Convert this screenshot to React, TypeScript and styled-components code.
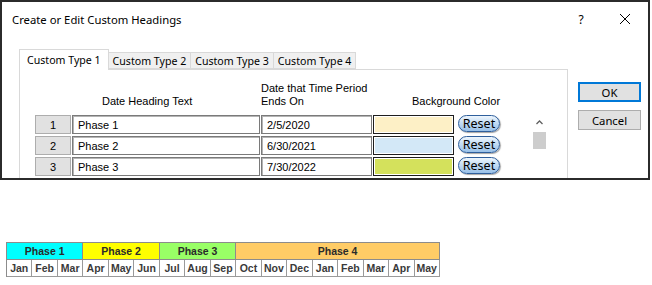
import React from "react";
import styled, { createGlobalStyle } from "styled-components";

const GlobalStyle = createGlobalStyle`
  body {
    margin: 0;
    background: #ffffff;
    font-family: "Noto Sans", "Liberation Sans", sans-serif;
  }
`;

const Dialog = styled.div`
  box-sizing: border-box;
  width: 650px;
  height: 180px;
  border: 2px solid #2b2b2b;
  background: #ffffff;
  overflow: hidden;
`;

const TitleBar = styled.div`
  display: flex;
  align-items: center;
  height: 34px;
  padding-left: 10px;
`;

const Title = styled.div`
  font-size: 11.3px;
  color: #000;
`;

const TitleButtons = styled.div`
  margin-left: auto;
  display: flex;
  align-items: center;
`;

const HelpGlyph = styled.span`
  font-size: 12px;
  width: 12px;
  text-align: center;
  margin-right: 32px;
`;

const CloseIcon = styled.svg`
  width: 12px;
  height: 12px;
  margin-right: 17px;
`;

const Body = styled.div`
  display: flex;
  padding: 13px 0 0 17px;
`;

const TabArea = styled.div`
  width: 549px;
`;

const TabStrip = styled.div`
  display: flex;
  align-items: flex-end;
  height: 20px;
`;

const Tab = styled.div<{ $active?: boolean }>`
  box-sizing: border-box;
  height: ${(p) => (p.$active ? "21px" : "17px")};
  margin-bottom: ${(p) => (p.$active ? "-1px" : "0")};
  padding: ${(p) => (p.$active ? "3px 7px 0 7px" : "1px 4px 0 4px")};
  border: 1px solid #d9d9d9;
  border-bottom: ${(p) => (p.$active ? "none" : "1px solid #d9d9d9")};
  margin-left: ${(p) => (p.$active ? "0" : "-1px")};
  background: ${(p) => (p.$active ? "#ffffff" : "#f0f0f0")};
  font-size: 10.6px;
  line-height: 15px;
  position: relative;
  z-index: ${(p) => (p.$active ? 1 : 0)};
  white-space: nowrap;
`;

const Panel = styled.div`
  box-sizing: border-box;
  height: 140px;
  border: 1px solid #d9d9d9;
  padding: 12px 0 0 15px;
  display: flex;
`;

const Grid = styled.div`
  display: grid;
  grid-template-columns: 36px 188px 111px 81px 45px;
  column-gap: 1px;
  row-gap: 2px;
  align-content: start;
  font-family: "Liberation Sans", Arial, sans-serif;
  font-size: 11px;
`;

const HeaderCell = styled.div<{ $indent?: number; $col: number }>`
  grid-row: 1;
  grid-column: ${(p) => p.$col};
  height: 26px;
  margin-bottom: 5px;
  display: flex;
  align-items: flex-end;
  padding-left: ${(p) => p.$indent ?? 0}px;
  line-height: 13px;
  white-space: nowrap;
`;

const NumButton = styled.div`
  box-sizing: border-box;
  height: 19px;
  background: #e1e1e1;
  border: 1px solid #adadad;
  display: flex;
  align-items: center;
  justify-content: center;
`;

const TextCell = styled.div`
  box-sizing: border-box;
  height: 19px;
  border: 1px solid #7a7a7a;
  box-shadow: inset 1px 1px 0 #b4b4b4;
  padding-left: 5px;
  display: flex;
  align-items: center;
  background: #fff;
  white-space: nowrap;
`;

const ColorCell = styled.div<{ $color: string }>`
  box-sizing: border-box;
  height: 19px;
  border: 1px solid #1e1e1e;
  box-shadow: inset 0 0 0 1px #ffffff;
  background: ${(p) => p.$color};
`;

const ResetButton = styled.div`
  box-sizing: border-box;
  margin-left: 3px;
  width: 42px;
  height: 17px;
  border: 1px solid #2f5f9c;
  border-radius: 9px;
  background: linear-gradient(#eef6fd 0%, #c5ddf4 45%, #98c0e8 100%);
  box-shadow: 1px 1px 1px rgba(0, 0, 0, 0.35);
  font-family: "Noto Sans", sans-serif;
  font-size: 12.5px;
  line-height: 15px;
  text-align: center;
`;

const ScrollBar = styled.div`
  margin: 33px 0 0 31px;
  width: 17px;
  display: flex;
  flex-direction: column;
  align-items: center;
`;

const ArrowIcon = styled.svg`
  width: 17px;
  height: 17px;
`;

const Thumb = styled.div`
  width: 13px;
  height: 17px;
  background: #cdcdcd;
`;

const SideButtons = styled.div`
  margin: 33px 0 0 10px;
  display: flex;
  flex-direction: column;
  gap: 8px;
`;

const DlgButton = styled.div<{ $default?: boolean }>`
  box-sizing: border-box;
  width: 63px;
  height: 20px;
  background: #e1e1e1;
  border: ${(p) => (p.$default ? "2px solid #0078d7" : "1px solid #adadad")};
  font-size: 11.3px;
  display: flex;
  align-items: center;
  justify-content: center;
`;

const Timeline = styled.div`
  margin: 62px 0 0 6px;
  width: 433px;
  display: grid;
  grid-template-columns: repeat(17, 1fr);
  border-top: 1px solid #8c8c8c;
  border-left: 1px solid #8c8c8c;
  font-family: "Liberation Sans", Arial, sans-serif;
  font-weight: bold;
  color: #2a2a2a;
`;

const PhaseCell = styled.div<{ $span: number; $color: string }>`
  grid-column: span ${(p) => p.$span};
  height: 16px;
  background: ${(p) => p.$color};
  border-right: 1px solid #8c8c8c;
  border-bottom: 1px solid #8c8c8c;
  font-size: 10.5px;
  line-height: 16px;
  text-align: center;
`;

const MonthCell = styled.div`
  height: 16px;
  background: #fff;
  border-right: 1px solid #9a9a9a;
  border-bottom: 1px solid #9a9a9a;
  font-size: 10.5px;
  line-height: 16px;
  text-align: center;
  color: #3a3a3a;
`;

const rows = [
  { n: 1, text: "Phase 1", date: "2/5/2020", color: "#fdf0c6" },
  { n: 2, text: "Phase 2", date: "6/30/2021", color: "#d3e8f7" },
  { n: 3, text: "Phase 3", date: "7/30/2022", color: "#d4e15c" },
  { n: 4, text: "", date: "", color: "#ffffff" },
];

const phases = [
  { label: "Phase 1", span: 3, color: "#00ffff" },
  { label: "Phase 2", span: 3, color: "#ffff00" },
  { label: "Phase 3", span: 3, color: "#99ff66" },
  { label: "Phase 4", span: 8, color: "#ffcc66" },
];

const months = [
  "Jan", "Feb", "Mar", "Apr", "May", "Jun", "Jul", "Aug", "Sep",
  "Oct", "Nov", "Dec", "Jan", "Feb", "Mar", "Apr", "May",
];

const tabs = ["Custom Type 1", "Custom Type 2", "Custom Type 3", "Custom Type 4"];

export default function App() {
  return (
    <>
      <GlobalStyle />
      <Dialog>
        <TitleBar>
          <Title>Create or Edit Custom Headings</Title>
          <TitleButtons>
            <HelpGlyph>?</HelpGlyph>
            <CloseIcon viewBox="0 0 12 12">
              <path d="M1 1 L11 11 M11 1 L1 11" stroke="#000" strokeWidth="1" />
            </CloseIcon>
          </TitleButtons>
        </TitleBar>
        <Body>
          <TabArea>
            <TabStrip>
              {tabs.map((t, i) => (
                <Tab key={t} $active={i === 0}>
                  {t}
                </Tab>
              ))}
            </TabStrip>
            <Panel>
              <Grid>
                <HeaderCell $col={1} />
                <HeaderCell $col={2} $indent={30}>Date Heading Text</HeaderCell>
                <HeaderCell $col={3}>
                  Date that Time Period
                  <br />
                  Ends On
                </HeaderCell>
                <HeaderCell $col={4} $indent={39}>Background Color</HeaderCell>
                <HeaderCell $col={5} />
                {rows.map((r) => (
                  <React.Fragment key={r.n}>
                    <NumButton>{r.n}</NumButton>
                    <TextCell>{r.text}</TextCell>
                    <TextCell>{r.date}</TextCell>
                    <ColorCell $color={r.color} />
                    <ResetButton>Reset</ResetButton>
                  </React.Fragment>
                ))}
              </Grid>
              <ScrollBar>
                <ArrowIcon viewBox="0 0 17 17">
                  <path d="M5.5 9 L8.5 6 L11.5 9" stroke="#606060" strokeWidth="1.3" fill="none" />
                </ArrowIcon>
                <Thumb />
              </ScrollBar>
            </Panel>
          </TabArea>
          <SideButtons>
            <DlgButton $default>OK</DlgButton>
            <DlgButton>Cancel</DlgButton>
          </SideButtons>
        </Body>
      </Dialog>
      <Timeline>
        {phases.map((p) => (
          <PhaseCell key={p.label} $span={p.span} $color={p.color}>
            {p.label}
          </PhaseCell>
        ))}
        {months.map((m, i) => (
          <MonthCell key={i}>{m}</MonthCell>
        ))}
      </Timeline>
    </>
  );
}
